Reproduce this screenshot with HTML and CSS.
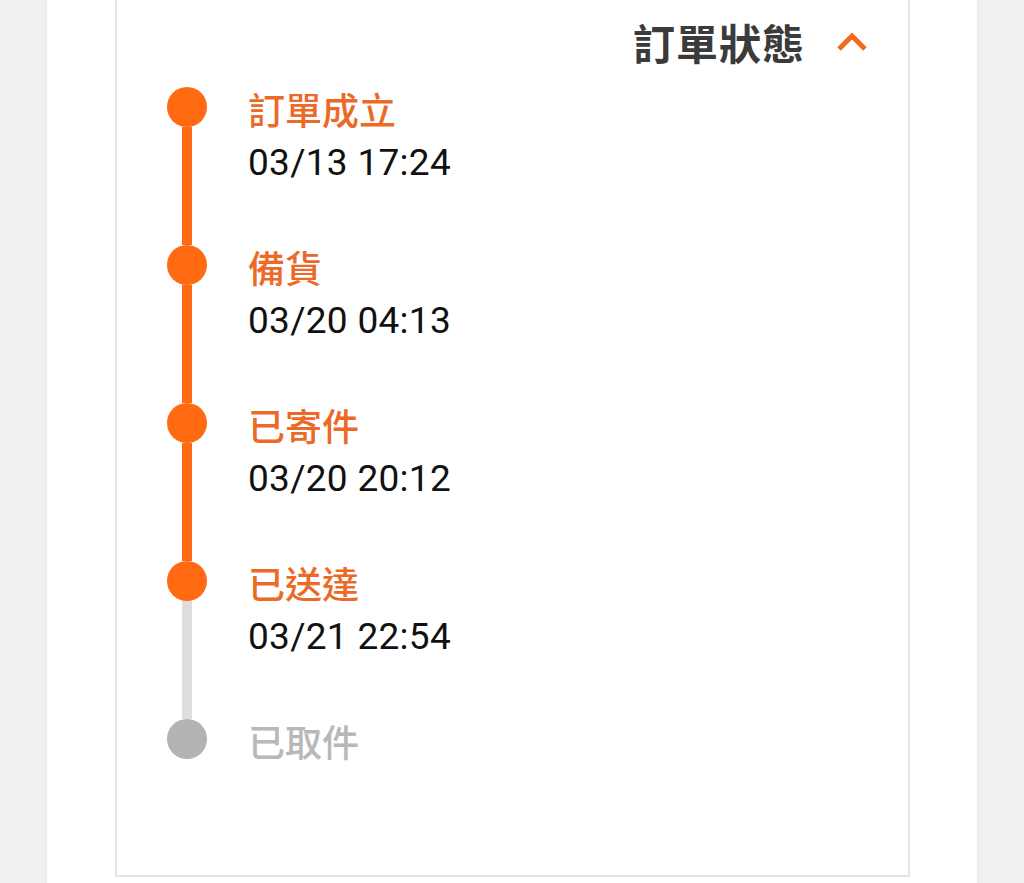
FILE: index.html
```html
<!DOCTYPE html>
<html lang="zh-Hant">
<head>
    <meta charset="UTF-8">
    <meta name="viewport" content="width=device-width, initial-scale=1.0">
    <title>訂單狀態</title>
    <link rel="stylesheet" href="styles.css">
</head>
<body>
    <div class="page">
        <section class="status-card">
            <header class="status-header">
                <h2>訂單狀態</h2>
                <svg class="chevron" width="32" height="20" viewBox="0 0 32 20" aria-hidden="true">
                    <polyline points="3,17 16,4 29,17" fill="none" stroke="#f06a1f" stroke-width="5" stroke-linejoin="miter"/>
                </svg>
            </header>

            <ol class="timeline">
                <li class="step done">
                    <div class="marker"><span class="dot"></span><span class="line"></span></div>
                    <div class="step-body">
                        <div class="step-title">訂單成立</div>
                        <div class="step-time">03/13 17:24</div>
                    </div>
                </li>
                <li class="step done">
                    <div class="marker"><span class="dot"></span><span class="line"></span></div>
                    <div class="step-body">
                        <div class="step-title">備貨</div>
                        <div class="step-time">03/20 04:13</div>
                    </div>
                </li>
                <li class="step done">
                    <div class="marker"><span class="dot"></span><span class="line"></span></div>
                    <div class="step-body">
                        <div class="step-title">已寄件</div>
                        <div class="step-time">03/20 20:12</div>
                    </div>
                </li>
                <li class="step current">
                    <div class="marker"><span class="dot"></span><span class="line"></span></div>
                    <div class="step-body">
                        <div class="step-title">已送達</div>
                        <div class="step-time">03/21 22:54</div>
                    </div>
                </li>
                <li class="step pending last">
                    <div class="marker"><span class="dot"></span></div>
                    <div class="step-body">
                        <div class="step-title">已取件</div>
                    </div>
                </li>
            </ol>
        </section>
    </div>
</body>
</html>
```

FILE: styles.css
```css
body {
    margin: 0;
    padding: 0;
    background-color: #eff1f0;
    font-family: "Noto Sans CJK TC", "Noto Sans", sans-serif;
    color: #333;
}

.page {
    width: 930px;
    min-height: 100vh;
    margin: 0 auto;
    background-color: #fff;
    box-shadow: 0 0 6px rgba(0, 0, 0, 0.05);
    overflow: hidden;
}

.status-card {
    width: 795px;
    box-sizing: border-box;
    margin: -2px 0 0 68px;
    padding: 18px 0 112px;
    border: 2px solid #e3e4e4;
}

.status-header {
    display: flex;
    justify-content: flex-end;
    align-items: center;
    gap: 31px;
    height: 48px;
    padding-right: 40px;
}

.status-header h2 {
    margin: 0;
    font-size: 42px;
    line-height: 48px;
    font-weight: 700;
    letter-spacing: 1px;
    color: #3b3b3b;
}

.chevron {
    display: block;
}

.timeline {
    list-style: none;
    margin: 21px 0 0;
    padding: 0 0 0 50px;
}

.step {
    display: flex;
    gap: 41px;
}

.marker {
    display: flex;
    flex-direction: column;
    align-items: center;
    width: 40px;
    flex-shrink: 0;
}

.dot {
    width: 40px;
    height: 40px;
    border-radius: 50%;
    background-color: #ff6a12;
    flex-shrink: 0;
}

.line {
    flex: 1;
    width: 10px;
    background-color: #ff6a12;
}

.step.current .line {
    background-color: #dedede;
}

.step.pending .dot {
    background-color: #b3b3b3;
}

.step-body {
    padding-bottom: 60px;
}

.step.last .step-body {
    padding-bottom: 0;
}

.step-title {
    font-size: 37px;
    line-height: 44px;
    font-weight: 500;
    color: #ec6a27;
}

.step.pending .step-title {
    color: #b8b8b8;
}

.step-time {
    margin-top: 10px;
    font-family: Roboto, "Liberation Sans", sans-serif;
    font-size: 37px;
    line-height: 44px;
    letter-spacing: 0.3px;
    color: #111;
}
```
